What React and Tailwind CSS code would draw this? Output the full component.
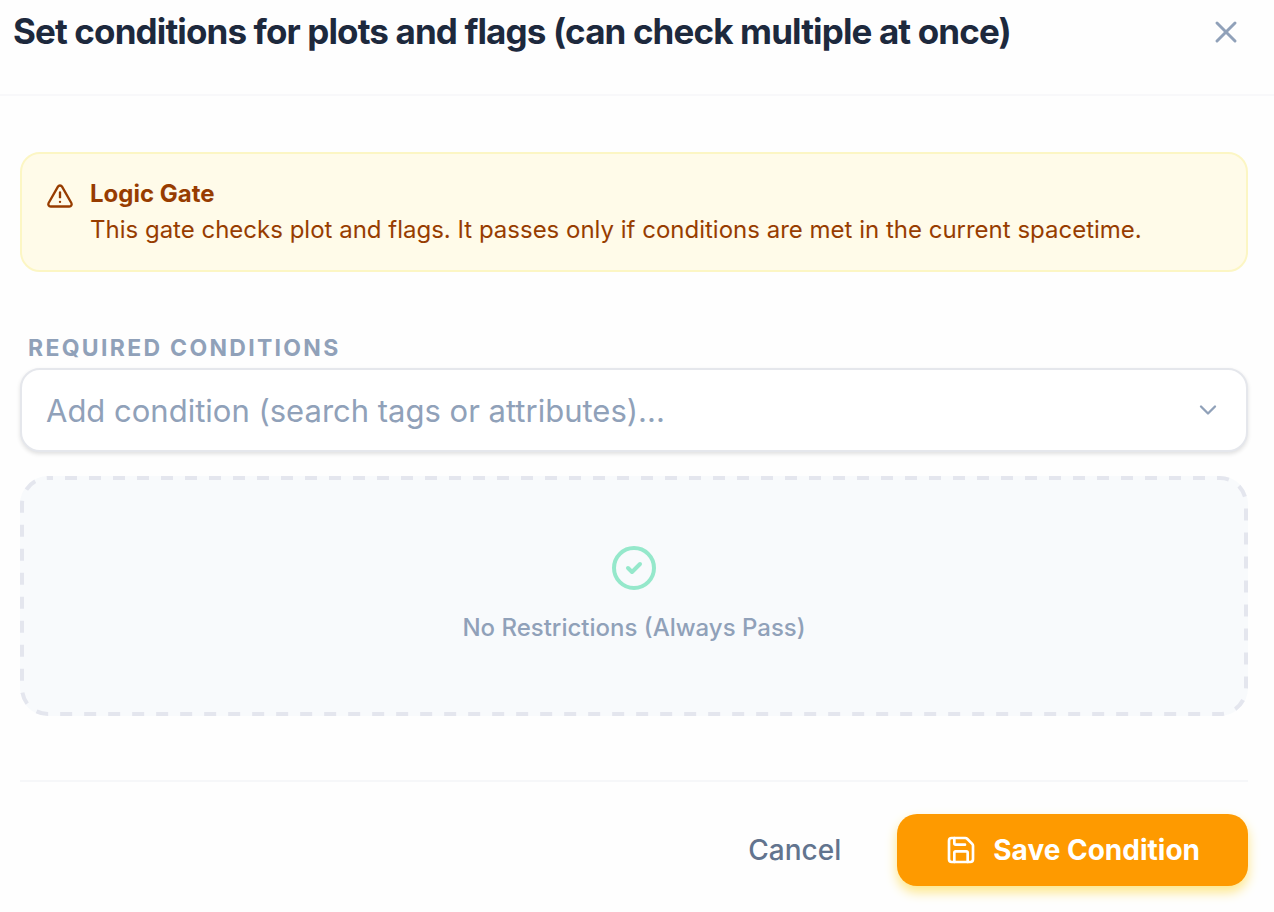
import React from "react";
import { ChevronDown, CircleCheck, Save, TriangleAlert, X } from "lucide-react";

function Header() {
  return (
    <header className="flex h-24 items-start justify-between border-b-2 border-[#f8f8fa] pl-[13px] pr-7 pt-2">
      <h1 className="text-[35px] leading-[46px] font-bold tracking-tight text-slate-800">
        Set conditions for plots and flags (can check multiple at once)
      </h1>
      <button type="button" aria-label="Close" className="mt-1 flex size-10 items-center justify-center text-slate-400">
        <X size={36} strokeWidth={2} />
      </button>
    </header>
  );
}

function LogicNotice() {
  return (
    <section className="flex gap-4 rounded-[20px] border-2 border-[#fcf6c4] bg-[#fffbe9] px-6 py-[22px] text-amber-800">
      <TriangleAlert size={28} className="mt-[6px] shrink-0" />
      <div className="text-[24px] leading-9">
        <h2 className="font-bold">Logic Gate</h2>
        <p>This gate checks plot and flags. It passes only if conditions are met in the current spacetime.</p>
      </div>
    </section>
  );
}

function ConditionPicker() {
  return (
    <div className="mt-14 flex flex-col">
      <label htmlFor="condition" className="px-2 pt-[2px] pb-[2px] text-[23px] leading-9 font-bold tracking-widest text-slate-400 uppercase">
        Required Conditions
      </label>
      <div className="grid items-center">
        <select
          id="condition"
          defaultValue=""
          className="col-start-1 row-start-1 h-[84px] w-full appearance-none rounded-[20px] border-2 border-[#e5e7ec] bg-white px-6 pt-[2px] text-[31px] text-slate-400 shadow-[0_2px_4px_rgba(0,0,0,0.12)]"
        >
          <option value="">Add condition (search tags or attributes)...</option>
        </select>
        <ChevronDown size={28} className="pointer-events-none col-start-1 row-start-1 mr-[26px] justify-self-end text-slate-400" />
      </div>
    </div>
  );
}

function DashedOutline() {
  return (
    <svg aria-hidden="true" className="pointer-events-none absolute inset-0 size-full">
      <rect
        x="2"
        y="2"
        rx="26"
        className="h-[calc(100%-4px)] w-[calc(100%-4px)] fill-none stroke-[#e4e6ee]"
        strokeWidth="4"
        strokeDasharray="12 12"
        strokeDashoffset="7"
      />
    </svg>
  );
}

function EmptyState() {
  return (
    <div className="relative mt-6 flex h-60 flex-col items-center justify-center gap-4 rounded-[28px] bg-slate-50 text-slate-400">
      <DashedOutline />
      <CircleCheck size={48} className="text-[#95e8cb]" />
      <p className="text-[24px] leading-10 font-medium">No Restrictions (Always Pass)</p>
    </div>
  );
}

function Footer() {
  return (
    <footer className="mt-16 flex items-center justify-end gap-6 border-t-2 border-[#f6f7f9] pt-8 text-[28px]">
      <button type="button" className="h-[72px] px-8 font-medium text-slate-500">
        Cancel
      </button>
      <button
        type="button"
        className="flex h-[72px] items-center gap-4 rounded-[20px] bg-amber-500 px-12 font-bold text-white shadow-[0_6px_12px_#fee685]"
      >
        <Save size={32} />
        Save Condition
      </button>
    </footer>
  );
}

export default function App() {
  return (
    <div className="min-h-screen bg-[#fefefe] font-['Inter',sans-serif]">
      <Header />
      <main className="pt-14 pr-[26px] pb-[26px] pl-5">
        <LogicNotice />
        <ConditionPicker />
        <EmptyState />
        <Footer />
      </main>
    </div>
  );
}
